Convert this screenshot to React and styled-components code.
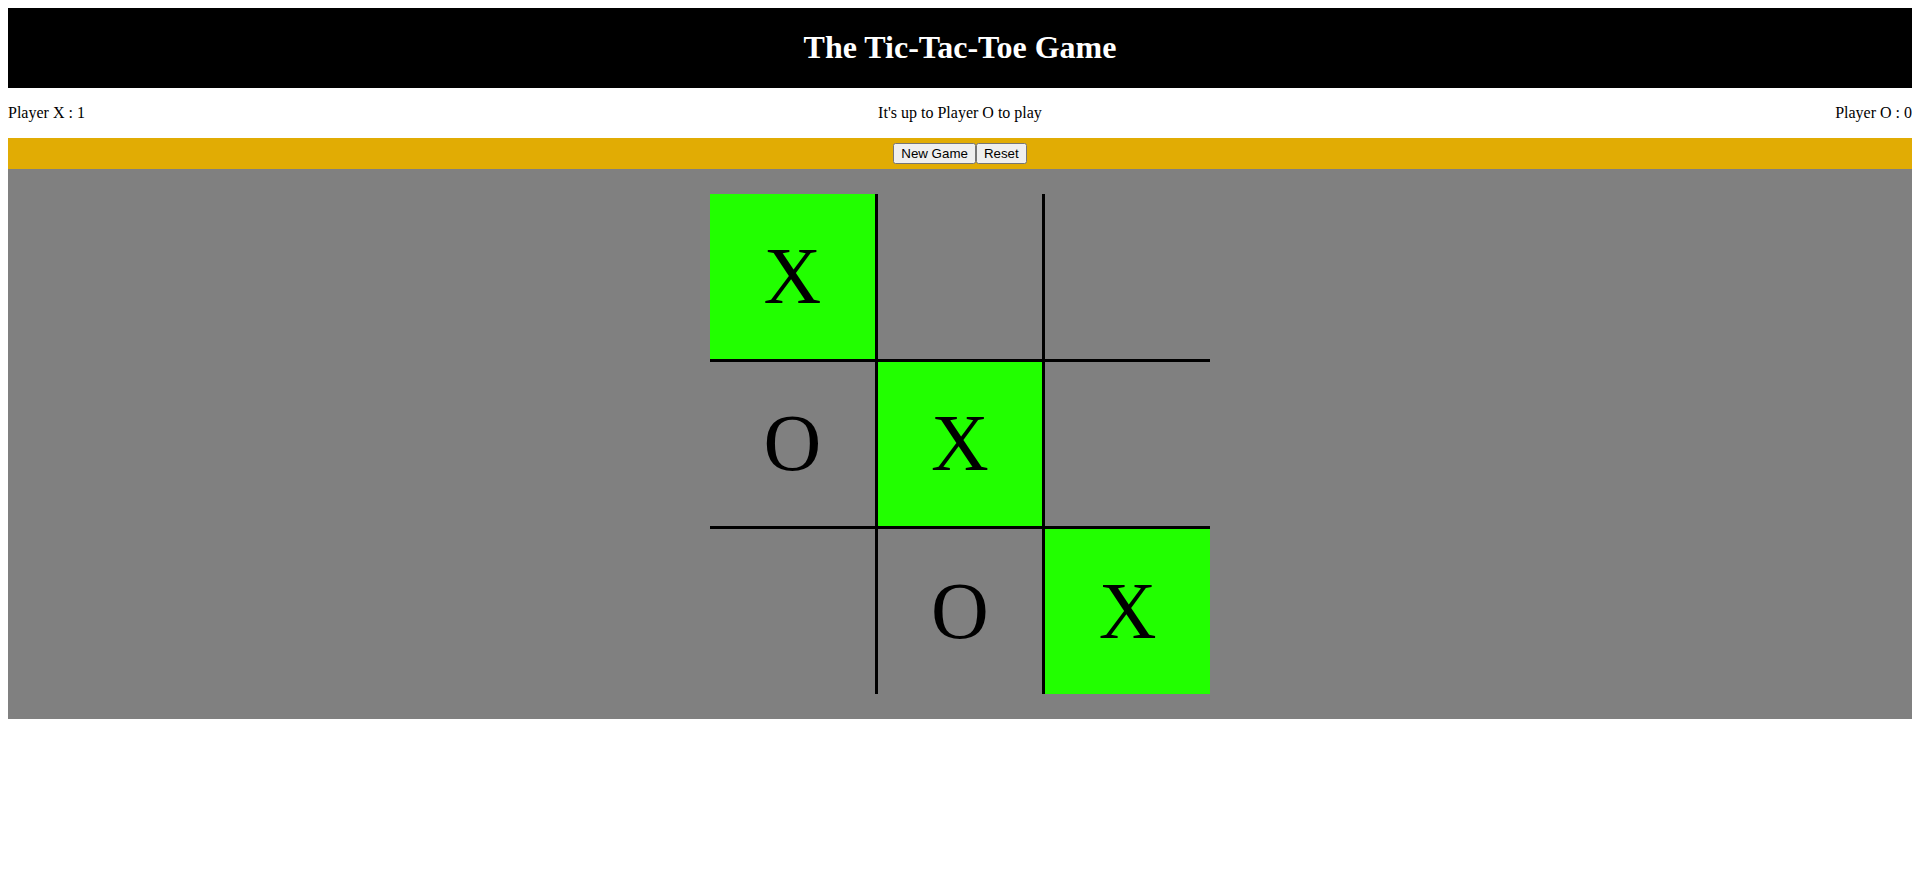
import { useState } from 'react';
import styled, { createGlobalStyle } from 'styled-components';

const GlobalStyle = createGlobalStyle`
    body {
        margin: 8px;
        font-family: "Liberation Serif", "Times New Roman", serif;
        font-size: 16px;
        color: #000;
        background: #fff;
    }
`;

const lines = [
    [0, 1, 2], [3, 4, 5], [6, 7, 8],
    [0, 3, 6], [1, 4, 7], [2, 5, 8],
    [0, 4, 8], [2, 4, 6]
];

function findWinner(board) {
    for (const [a, b, c] of lines) {
        if (board[a] && board[a] === board[b] && board[a] === board[c]) {
            return [a, b, c];
        }
    }
    return null;
}

export default function App() {

    const [board, setBoard] = useState(['X', '', '', 'O', 'X', '', '', 'O', 'X']);
    const [player, setPlayer] = useState('O');
    const [score, setScore] = useState({ X: 1, O: 0 });

    const winLine = findWinner(board) || [];

    function play(index) {
        if (board[index] || winLine.length) return;
        const next = [...board];
        next[index] = player;
        setBoard(next);
        if (findWinner(next)) {
            setScore({ ...score, [player]: score[player] + 1 });
        }
        setPlayer(player === 'X' ? 'O' : 'X');
    }

    function newGame() {
        setBoard(Array(9).fill(''));
    }

    function reset() {
        setBoard(Array(9).fill(''));
        setScore({ X: 0, O: 0 });
        setPlayer('X');
    }

    return (
        <>
            <GlobalStyle />

            <Header>
                <Title>The Tic-Tac-Toe Game</Title>
            </Header>

            <Status>
                <Score>Player X : {score.X}</Score>
                <Turn>It's up to Player {player} to play</Turn>
                <Score right>Player O : {score.O}</Score>
            </Status>

            <Toolbar>
                <Button onClick={newGame}>New Game</Button><Button onClick={reset}>Reset</Button>
            </Toolbar>

            <Area>
                <Board>
                    {board.map((value, index) =>
                        <Cell
                            key={index}
                            win={winLine.includes(index)}
                            onClick={() => play(index)}
                        >
                            {value}
                        </Cell>
                    )}
                </Board>
            </Area>
        </>
    );
}

const Header = styled.header`
    background: #000;
    height: 80px;
    display: flex;
    align-items: center;
    justify-content: center;
`;
const Title = styled.h1`
    margin: 0;
    color: #fff;
    font-size: 32px;
    font-weight: 700;
    position: relative;
    top: -1px;
`;
const Status = styled.div`
    display: grid;
    grid-template-columns: 1fr auto 1fr;
    align-items: center;
    height: 50px;
    line-height: 18px;
`;
const Score = styled.p`
    margin: 0;
    text-align: ${(props) => (props.right ? 'right' : 'left')};
`;
const Turn = styled.p`
    margin: 0;
    text-align: center;
`;
const Toolbar = styled.div`
    background: #e1ac04;
    height: 31px;
    display: flex;
    align-items: center;
    justify-content: center;
`;
const Button = styled.button`
    font-family: "Liberation Sans", Arial, sans-serif;
    font-size: 13.333px;
    margin: 0;
`;
const Area = styled.div`
    background: #808080;
    padding: 25px 0;
    display: flex;
    justify-content: center;
`;
const Board = styled.div`
    width: 500px;
    height: 500px;
    display: grid;
    grid-template-columns: repeat(3, 1fr);
    grid-template-rows: repeat(3, 1fr);
    gap: 3px;
    background: #000;
`;
const Cell = styled.div`
    display: flex;
    align-items: center;
    justify-content: center;
    font-size: 80px;
    cursor: pointer;
    background: ${(props) => (props.win ? '#22ff00' : '#808080')};
`;
